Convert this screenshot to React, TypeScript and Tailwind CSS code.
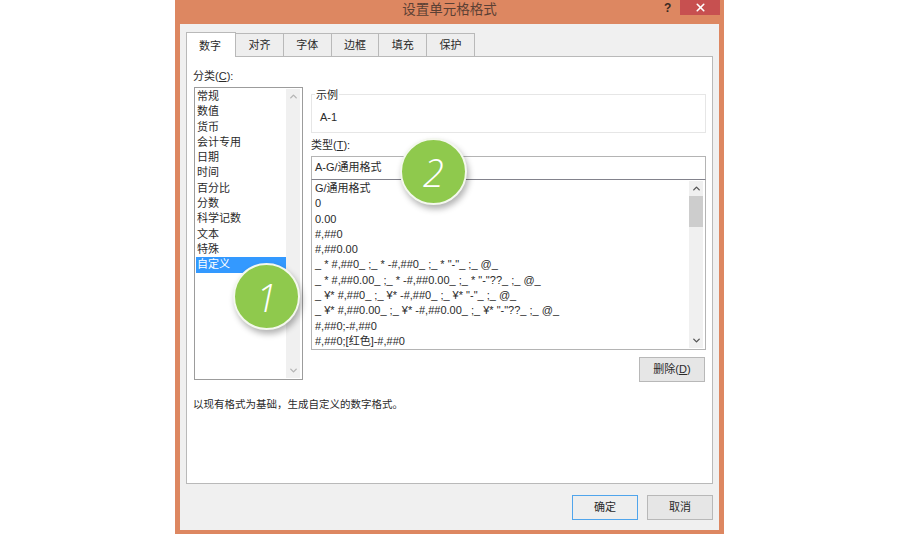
import React from "react";
import { ChevronUp, ChevronDown, X } from "lucide-react";

const font = { fontFamily: '"Liberation Sans", "Noto Sans CJK SC", sans-serif' };
const tabs = ["对齐", "字体", "边框", "填充", "保护"];
const cats = ["常规", "数值", "货币", "会计专用", "日期", "时间", "百分比", "分数", "科学记数", "文本", "特殊", "自定义"];
const formats = [
  "G/通用格式",
  "0",
  "0.00",
  "#,##0",
  "#,##0.00",
  '_ * #,##0_ ;_ * -#,##0_ ;_ * "-"_ ;_ @_',
  '_ * #,##0.00_ ;_ * -#,##0.00_ ;_ * "-"??_ ;_ @_',
  '_ ¥* #,##0_ ;_ ¥* -#,##0_ ;_ ¥* "-"_ ;_ @_',
  '_ ¥* #,##0.00_ ;_ ¥* -#,##0.00_ ;_ ¥* "-"??_ ;_ @_',
  "#,##0;-#,##0",
  "#,##0;[红色]-#,##0",
];

function Scrollbar({ faded, thumb }: { faded?: boolean; thumb?: boolean }) {
  const c = faded ? "text-[#b4b4b4]" : "text-[#555555]";
  return (
    <div className="w-[14px] mr-[1px] shrink-0 bg-[#f0f0f0] flex flex-col justify-between items-center">
      <div className="flex flex-col w-full items-center">
        <div className="h-[15px] flex items-center justify-center">
          <ChevronUp size={11} strokeWidth={3} className={c} />
        </div>
        {thumb && <div className="w-full h-[31px] bg-[#cdcdcd]" />}
      </div>
      <div className="h-[16px] flex items-center justify-center">
        <ChevronDown size={11} strokeWidth={3} className={c} />
      </div>
    </div>
  );
}

function Badge({ n, className }: { n: string; className: string }) {
  return (
    <div
      className={`absolute w-[67px] h-[67px] rounded-full bg-[#8fc94d] border-[2px] border-[#f4f8ee] shadow-[2px_4px_6px_rgba(0,0,0,0.3)] flex items-center justify-center text-white text-[38px] italic font-light leading-none ${className}`}
      style={{ fontFamily: '"Open Sans", sans-serif' }}
    >
      {n}
    </div>
  );
}

function Btn({ label, primary }: { label: React.ReactNode; primary?: boolean }) {
  return (
    <div
      className={`w-[66px] h-[25px] flex items-center justify-center text-[11px] text-[#2a2a2a] border ${
        primary ? "border-[#50a5ec] bg-[#eeeeee]" : "border-[#b8b8b8] bg-[#e6e6e6]"
      }`}
    >
      {label}
    </div>
  );
}

export default function App() {
  return (
    <div className="relative w-[900px] h-[535px] bg-white overflow-hidden text-[#2a2a2a]" style={font}>
      <div className="ml-[175px] w-[549px] h-[534px] bg-[#dd8761] px-[5px] pb-[4px] flex flex-col">
        <div className="h-[24px] shrink-0 relative flex items-center justify-center text-[13.5px] text-[#5b4034] pb-[4px] -mx-[5px]">
          设置单元格格式
          <span className="absolute left-[489px] top-[-1px] text-[12px] font-bold text-[#3a2a22]">?</span>
          <div className="absolute left-[505px] top-0 w-[40px] h-[15px] bg-[#c75050] flex items-center justify-center text-white">
            <X size={13} strokeWidth={3} />
          </div>
        </div>
        <div className="flex-1 bg-[#f0f0f0] flex flex-col pl-[6px] pr-[7px]">
          <div className="h-[32px] shrink-0 flex items-end">
            <div className="w-[50px] h-[25px] bg-white border border-b-0 border-[#b9b9b9] flex items-center justify-center pr-[2px] pt-[2px] text-[11px] relative top-[1px] z-10">
              数字
            </div>
            {tabs.map((t) => (
              <div
                key={t}
                className="w-[47.8px] h-[23px] bg-[#eeeeee] border border-b-0 border-l-0 border-[#b9b9b9] flex items-center justify-center text-[11px]"
              >
                {t}
              </div>
            ))}
          </div>
          <div className="h-[428px] w-[527px] shrink-0 bg-white border border-[#b9b9b9] pl-[7px] pr-[6px] flex flex-col">
            <div className="flex gap-[8px]">
              <div className="w-[109px] shrink-0 flex flex-col">
                <div className="h-[30px] pt-[12px] -ml-px text-[11px] leading-[15px]">
                  分类(<span className="underline">C</span>):
                </div>
                <div className="h-[293px] border border-[#9c9c9c] flex p-px">
                  <div className="flex-1 text-[11px]">
                    {cats.map((c, i) => (
                      <div
                        key={c}
                        className={`h-[15.3px] leading-[15.3px] pl-[1px] ${i === 11 ? "bg-[#3399ff] text-white" : ""}`}
                      >
                        {c}
                      </div>
                    ))}
                  </div>
                  <Scrollbar faded />
                </div>
              </div>
              <div className="w-[395px] shrink-0 flex flex-col">
                <div className="h-[76px] pt-[37px] relative">
                  <div className="h-[39px] border border-[#e6e6e6] pl-[8px] flex items-center text-[11px] pt-[8px]">
                    A-1
                  </div>
                  <span className="absolute left-[4px] top-[31px] bg-white px-[1px] text-[11px] leading-[14px]">示例</span>
                </div>
                <div className="h-[23px] pt-[5px] text-[11px] leading-[15px]">
                  类型(<span className="underline">T</span>):
                </div>
                <div className="h-[23px] border border-[#b4b4b4] border-b-0 pl-[3px] pb-[1px] flex items-center text-[11px]">
                  A-G/通用格式
                </div>
                <div className="h-[171px] border border-[#b4b4b4] border-t-[#82828c] flex p-px">
                  <div className="flex-1 pl-[2px] text-[11px]">
                    {formats.map((f) => (
                      <div key={f} className="h-[15.3px] leading-[15.3px] whitespace-pre">
                        {f}
                      </div>
                    ))}
                  </div>
                  <Scrollbar thumb />
                </div>
                <div className="flex justify-end pt-[7px] pr-[1px]">
                  <Btn label={<span>删除(<span className="underline">D</span>)</span>} />
                </div>
              </div>
            </div>
            <div className="mt-[15px] -ml-px text-[10.5px] leading-[15px]">以现有格式为基础，生成自定义的数字格式。</div>
          </div>
          <div className="flex justify-end gap-[9px] pt-[11px] -mr-[1px]">
            <Btn label="确定" primary />
            <Btn label="取消" />
          </div>
        </div>
      </div>
      <Badge n="1" className="left-[233px] top-[263px]" />
      <Badge n="2" className="left-[400px] top-[138px]" />
    </div>
  );
}
